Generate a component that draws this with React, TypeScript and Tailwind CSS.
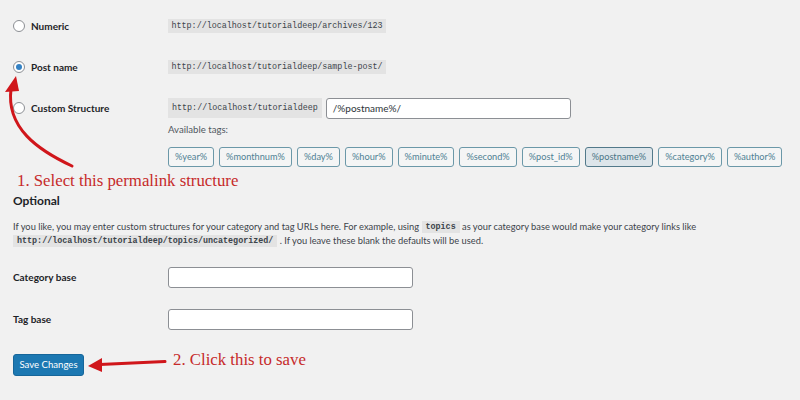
import React from "react";

const Radio = ({ checked }: { checked?: boolean }) => (
  <span className="w-[12px] h-[12px] rounded-full border border-[#8c8f94] bg-white flex items-center justify-center shrink-0">
    {checked && <span className="w-[6px] h-[6px] rounded-full bg-[#3582c4]" />}
  </span>
);

const Code = ({ children, tall }: { children: React.ReactNode; tall?: boolean }) => (
  <code
    className={
      "font-['Liberation_Mono',monospace] text-[8.4px] text-[#3c434a] bg-[#e3e3e3] " +
      (tall ? "h-[20px] flex items-center px-[4px]" : "h-[14px] flex items-center px-[3.5px]")
    }
  >
    {children}
  </code>
);

const InlineCode = ({ children }: { children: React.ReactNode }) => (
  <code className="font-['Liberation_Mono',monospace] text-[8.4px] font-bold text-[#3c434a] bg-[#e3e3e3] h-[12px] flex items-center px-[4px]">
    {children}
  </code>
);

const tags = [
  "%year%",
  "%monthnum%",
  "%day%",
  "%hour%",
  "%minute%",
  "%second%",
  "%post_id%",
  "%postname%",
  "%category%",
  "%author%",
];

export default function App() {
  return (
    <div className="w-[800px] h-[400px] bg-[#f1f1f1] relative overflow-hidden font-['Lato',sans-serif] text-[#1d2327]">
      <div className="pl-[13px] pt-[15px]">
        <div className="grid grid-cols-[155px_1fr] gap-y-[19px] items-center">
          <label className="flex items-center gap-[6px] h-[22px] text-[10px] font-bold">
            <Radio />
            Numeric
          </label>
          <div className="flex items-center">
            <Code>http://localhost/tutorialdeep/archives/123</Code>
          </div>

          <label className="flex items-center gap-[6px] h-[22px] text-[10px] font-bold">
            <Radio checked />
            Post name
          </label>
          <div className="flex items-center">
            <Code>http://localhost/tutorialdeep/sample-post/</Code>
          </div>

          <label className="flex items-center gap-[6px] h-[22px] text-[10px] font-bold">
            <Radio />
            Custom Structure
          </label>
          <div className="flex items-center gap-[4px] h-[22px]">
            <Code tall>http://localhost/tutorialdeep</Code>
            <div className="w-[245px] h-[21px] bg-white border border-[#8c8f94] rounded-[3px] flex items-center px-[6px] text-[10px] text-[#2c3338]">
              /%postname%/
            </div>
          </div>
        </div>

        <div className="pl-[155px] mt-[4px]">
          <div className="text-[9.6px] text-[#50575e] leading-[14px]">Available tags:</div>
          <div className="flex gap-[5px] mt-[10px]">
            {tags.map((t) => (
              <span
                key={t}
                className={
                  "h-[20px] px-[6px] flex items-center rounded-[3px] border text-[9.2px] " +
                  (t === "%postname%"
                    ? "bg-[#dde5ea] border-[#52798a] text-[#4a7587]"
                    : "bg-[#f4f5f5] border-[#6b98a8] text-[#4f8194]")
                }
              >
                {t}
              </span>
            ))}
          </div>
        </div>

        <h2 className="mt-[26px] text-[12px] font-bold leading-[16px]">Optional</h2>
        <div className="mt-[11px] text-[9.3px] text-[#3c434a]">
          <div className="h-[14px] flex items-center whitespace-pre">
            <span>If you like, you may enter custom structures for your category and tag URLs here. For example, using </span>
            <InlineCode>topics</InlineCode>
            <span> as your category base would make your category links like</span>
          </div>
          <div className="h-[14px] flex items-center whitespace-pre">
            <InlineCode>http://localhost/tutorialdeep/topics/uncategorized/</InlineCode>
            <span> . If you leave these blank the defaults will be used.</span>
          </div>
        </div>

        <div className="grid grid-cols-[155px_1fr] gap-y-[21px] items-center mt-[19px]">
          <div className="text-[10px] font-bold">Category base</div>
          <div className="w-[245px] h-[21px] bg-white border border-[#8c8f94] rounded-[3px]" />
          <div className="text-[10px] font-bold">Tag base</div>
          <div className="w-[245px] h-[21px] bg-white border border-[#8c8f94] rounded-[3px]" />
        </div>

        <button className="mt-[24px] h-[22px] w-[71px] bg-[#1c78b2] border border-[#16669a] rounded-[3px] text-white text-[9.6px] flex items-center justify-center">
          Save Changes
        </button>
      </div>

      {/* annotations */}
      <div className="absolute left-[17px] top-[171px] font-['Liberation_Serif',serif] text-[16.8px] leading-[20px] text-[#c62a2a] whitespace-nowrap">
        1. Select this permalink structure
      </div>
      <div className="absolute left-[173px] top-[350px] font-['Liberation_Serif',serif] text-[16.8px] leading-[20px] text-[#c62a2a] whitespace-nowrap">
        2. Click this to save
      </div>
      <svg className="absolute left-0 top-0 pointer-events-none" width="800" height="400" viewBox="0 0 800 400">
        <path d="M72 166 C 38 150, 6 128, 11 89" fill="none" stroke="#d0161b" strokeWidth="3" strokeLinecap="round" />
        <polygon points="16,76 5,92 19,91" fill="#d0161b" />
        <path d="M165 361.5 L 100 364.5" fill="none" stroke="#d0161b" strokeWidth="3" strokeLinecap="round" />
        <polygon points="88,366 102,358 102,372" fill="#d0161b" />
      </svg>
    </div>
  );
}
